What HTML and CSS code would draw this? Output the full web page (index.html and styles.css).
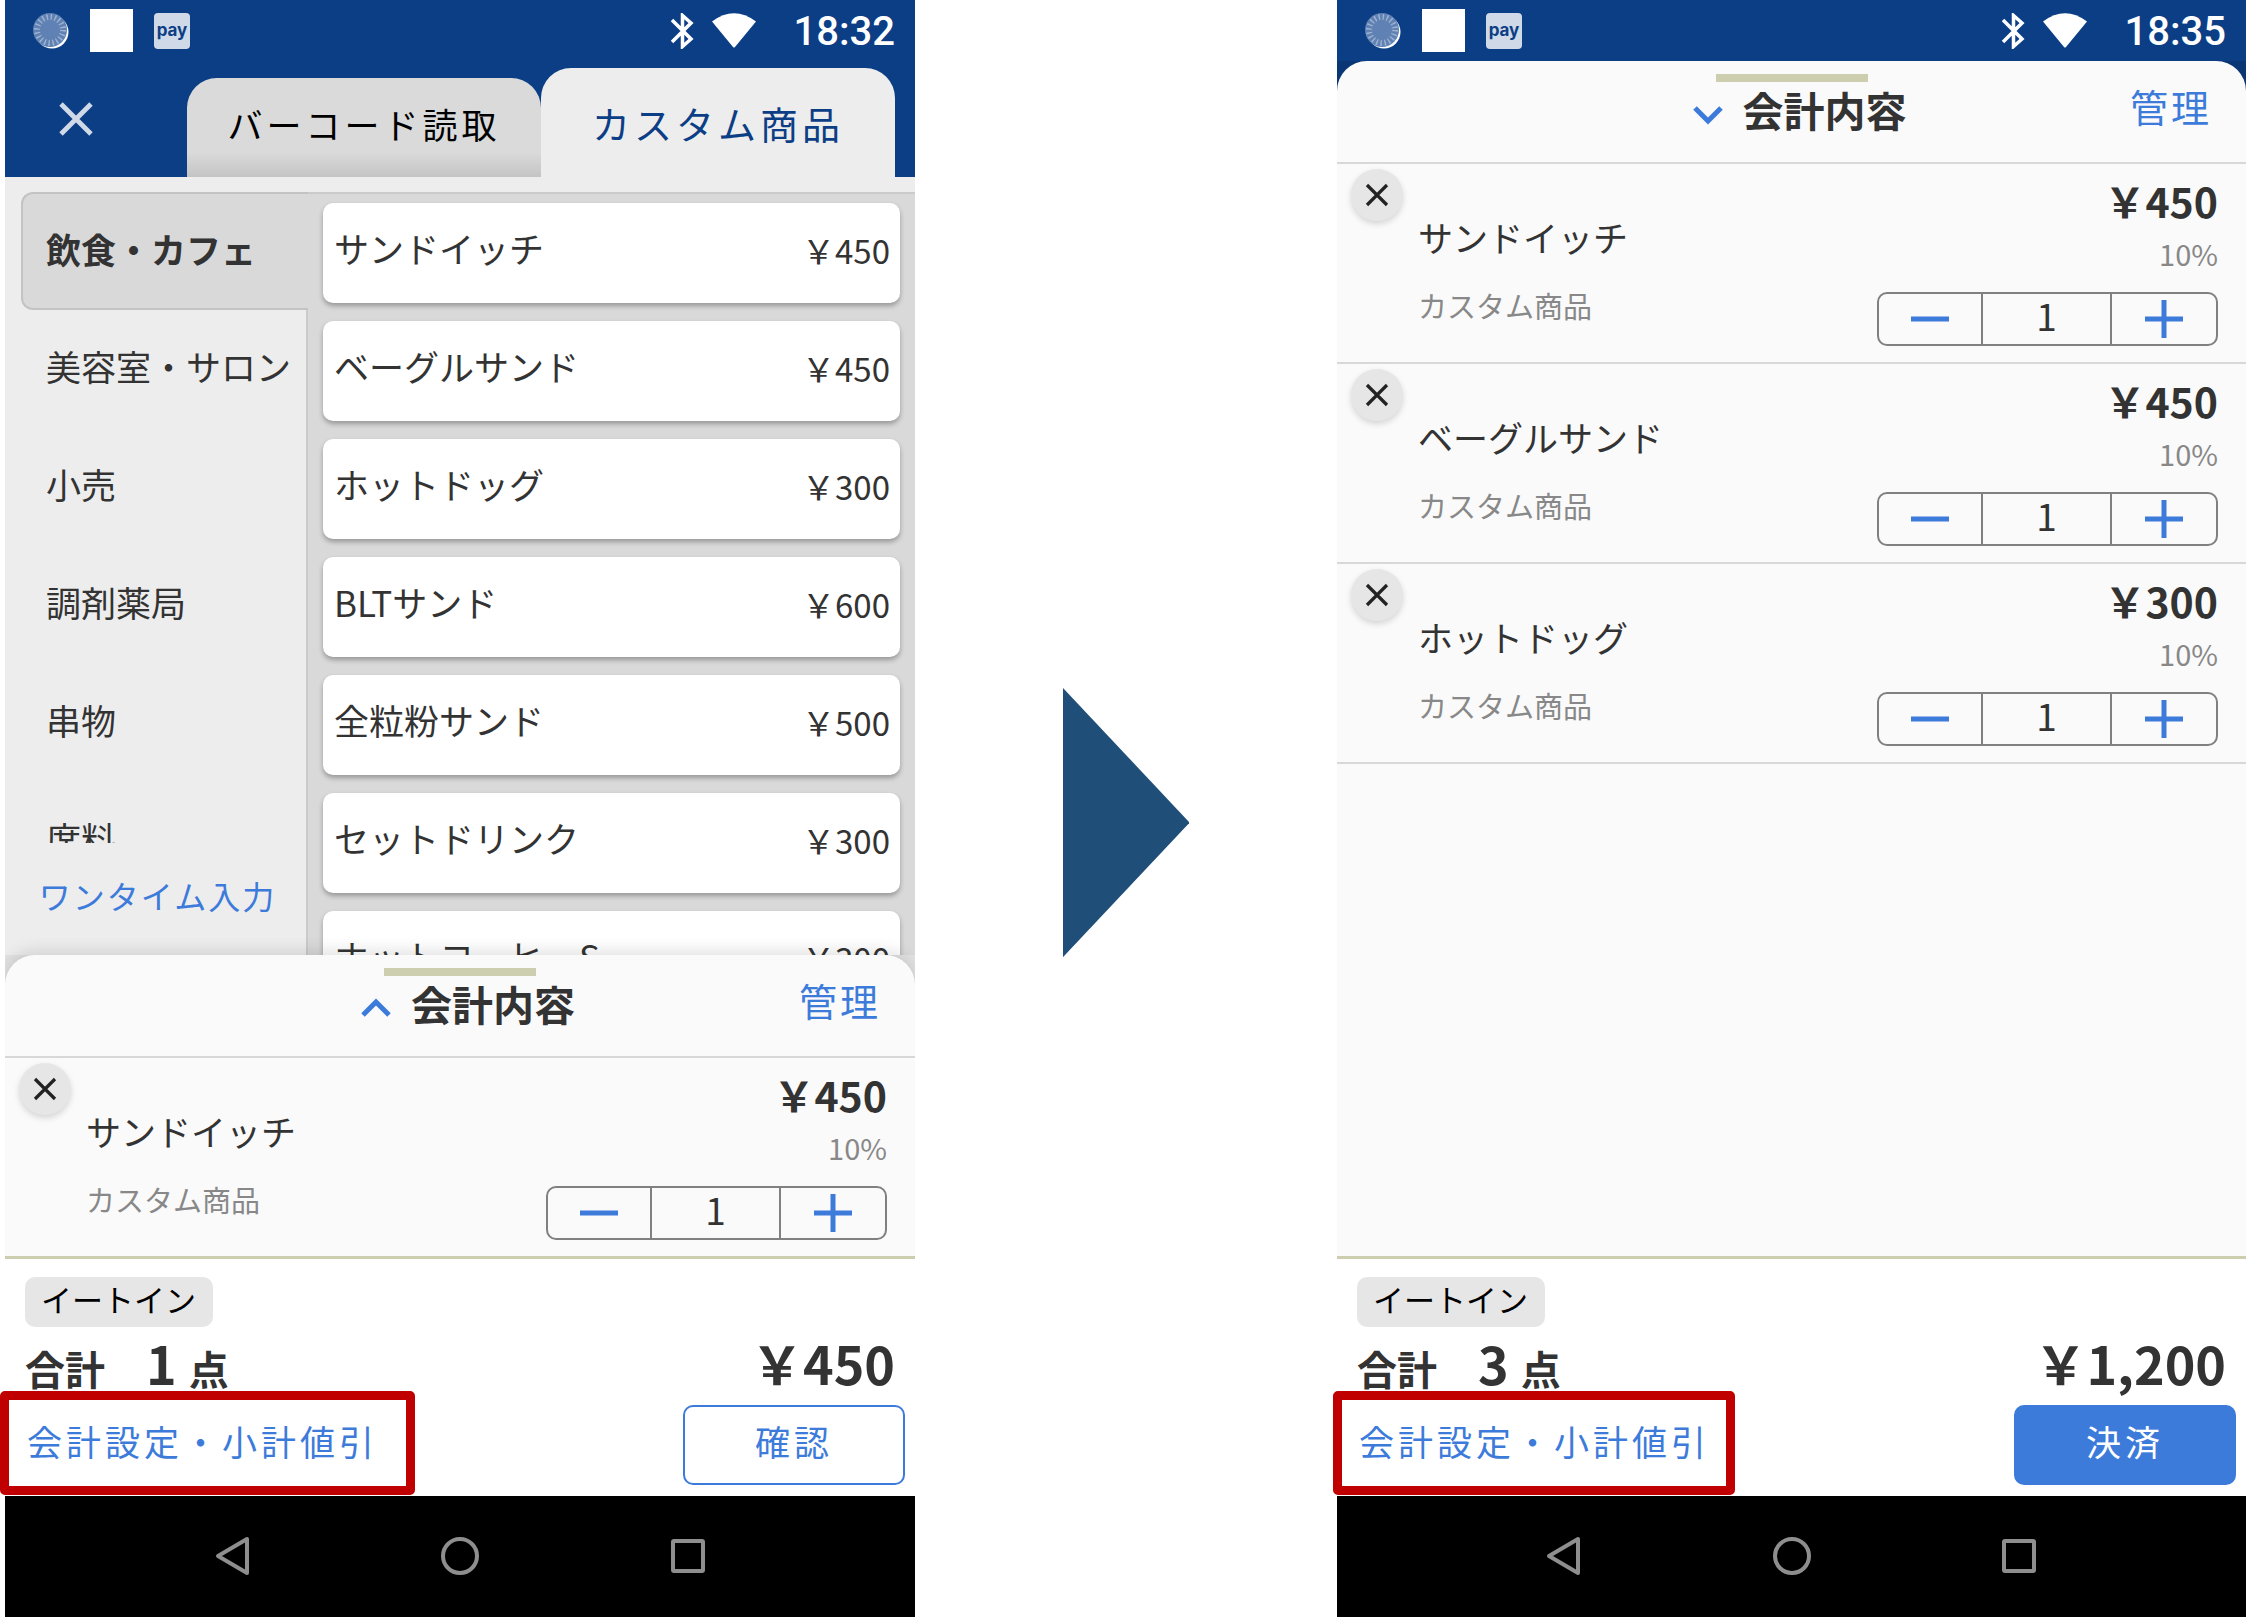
FILE: index.html
```html
<!DOCTYPE html>
<html lang="ja">
<head>
<meta charset="utf-8">
<title>会計内容</title>
<link rel="stylesheet" href="styles.css">
</head>
<body>
<svg class="defs" aria-hidden="true">
  <symbol id="i-sync" viewBox="0 0 36 36">
    <circle cx="19" cy="19" r="16.500" fill="#fff"/>
    <circle cx="17" cy="17" r="17" fill="#5f81b3"/>
    <circle cx="17" cy="17" r="13" fill="none" stroke="#9fb3d1" stroke-width="6" stroke-dasharray="1.4 2.7"/>
  </symbol>
  <symbol id="i-bt" viewBox="0 0 24 36">
    <path d="M2 7 L21 26 L12.500 33.500 V2.500 L21 10 L2 29" fill="none" stroke="#fff" stroke-width="3.500"/>
  </symbol>
  <symbol id="i-wifi" viewBox="0 0 44 35">
    <path d="M0 8.500 Q22 -8 44 8.500 L23 34 Q22 35 21 34 Z" fill="#fff"/>
  </symbol>
  <symbol id="i-x" viewBox="0 0 24 24">
    <path d="M2 2 L22 22 M22 2 L2 22" fill="none" stroke="currentColor" stroke-width="3.200"/>
  </symbol>
  <symbol id="i-up" viewBox="0 0 58 58">
    <path d="M16 38 L29 25 L42 38" fill="none" stroke="#3d7bdb" stroke-width="5"/>
  </symbol>
  <symbol id="i-down" viewBox="0 0 58 58">
    <path d="M16 25 L29 38 L42 25" fill="none" stroke="#3d7bdb" stroke-width="5"/>
  </symbol>
  <symbol id="i-minus" viewBox="0 0 38 38"><path d="M0 19 H38" stroke="#3d7bdb" stroke-width="5"/></symbol>
  <symbol id="i-plus" viewBox="0 0 38 38"><path d="M0 19 H38 M19 0 V38" stroke="#3d7bdb" stroke-width="5"/></symbol>
  <symbol id="i-back" viewBox="0 0 40 40"><path d="M34 3 V37 L5 20 Z" fill="none" stroke="#8e8e8e" stroke-width="4" stroke-linejoin="round"/></symbol>
  <symbol id="i-home" viewBox="0 0 40 40"><circle cx="20" cy="20" r="17" fill="none" stroke="#8e8e8e" stroke-width="4"/></symbol>
  <symbol id="i-recent" viewBox="0 0 40 40"><rect x="5" y="5" width="30" height="30" rx="1" fill="none" stroke="#8e8e8e" stroke-width="4"/></symbol>
</svg>
<main class="steps">
  <section class="phone">
    <div class="status">
      <svg class="sync"><use href="#i-sync"/></svg>
      <span class="blank"></span>
      <span class="pay">pay</span>
      <svg class="bt"><use href="#i-bt"/></svg>
      <svg class="wifi"><use href="#i-wifi"/></svg>
      <span class="time">18:32</span>
    </div>
    <header class="top">
      <button class="close" aria-label="閉じる"><svg><use href="#i-x"/></svg></button>
      <button class="tab">バーコード読取</button>
      <button class="tab active">カスタム商品</button>
    </header>
    <div class="catalog">
      <nav class="side">
        <div class="cats">
          <button class="cat selected">飲食・カフェ</button>
          <button class="cat">美容室・サロン</button>
          <button class="cat">小売</button>
          <button class="cat">調剤薬局</button>
          <button class="cat">串物</button>
          <button class="cat">席料</button>
        </div>
        <button class="onetime">ワンタイム入力</button>
      </nav>
      <div class="products">
        <button class="product"><span>サンドイッチ</span><span class="yen">￥450</span></button>
        <button class="product"><span>ベーグルサンド</span><span class="yen">￥450</span></button>
        <button class="product"><span>ホットドッグ</span><span class="yen">￥300</span></button>
        <button class="product"><span>BLTサンド</span><span class="yen">￥600</span></button>
        <button class="product"><span>全粒粉サンド</span><span class="yen">￥500</span></button>
        <button class="product"><span>セットドリンク</span><span class="yen">￥300</span></button>
        <button class="product"><span>ホットコーヒーS</span><span class="yen">￥300</span></button>
      </div>
    </div>
    <div class="sheet">
      <div class="sheet-head">
        <button class="toggle"><svg><use href="#i-up"/></svg><span>会計内容</span></button>
        <button class="manage">管理</button>
      </div>
      <div class="item">
        <button class="remove" aria-label="削除"><svg><use href="#i-x"/></svg></button>
        <div class="info"><span class="name">サンドイッチ</span><span class="kind">カスタム商品</span></div>
        <div class="amount">
          <span class="price">￥450</span><span class="rate">10%</span>
          <div class="qty"><button aria-label="減らす"><svg><use href="#i-minus"/></svg></button><span>1</span><button aria-label="増やす"><svg><use href="#i-plus"/></svg></button></div>
        </div>
      </div>
    </div>
    <footer class="summary">
      <span class="tag">イートイン</span>
      <div class="total"><span>合計</span><span class="count">1</span><span>点</span><span class="sum">￥450</span></div>
      <div class="actions">
        <a class="settings" href="#">会計設定・小計値引</a>
        <button class="go">確認</button>
      </div>
    </footer>
    <div class="navbar">
      <button aria-label="戻る"><svg><use href="#i-back"/></svg></button>
      <button aria-label="ホーム"><svg><use href="#i-home"/></svg></button>
      <button aria-label="履歴"><svg><use href="#i-recent"/></svg></button>
    </div>
  </section>

  <div class="arrow"><svg viewBox="0 0 127 270"><path d="M0 0 L127 135 L0 270 Z" fill="#1f4e79"/></svg></div>

  <section class="phone expanded">
    <div class="status">
      <svg class="sync"><use href="#i-sync"/></svg>
      <span class="blank"></span>
      <span class="pay">pay</span>
      <svg class="bt"><use href="#i-bt"/></svg>
      <svg class="wifi"><use href="#i-wifi"/></svg>
      <span class="time">18:35</span>
    </div>
    <div class="sheet">
      <div class="sheet-head">
        <button class="toggle"><svg><use href="#i-down"/></svg><span>会計内容</span></button>
        <button class="manage">管理</button>
      </div>
      <div class="item">
        <button class="remove" aria-label="削除"><svg><use href="#i-x"/></svg></button>
        <div class="info"><span class="name">サンドイッチ</span><span class="kind">カスタム商品</span></div>
        <div class="amount">
          <span class="price">￥450</span><span class="rate">10%</span>
          <div class="qty"><button aria-label="減らす"><svg><use href="#i-minus"/></svg></button><span>1</span><button aria-label="増やす"><svg><use href="#i-plus"/></svg></button></div>
        </div>
      </div>
      <div class="item">
        <button class="remove" aria-label="削除"><svg><use href="#i-x"/></svg></button>
        <div class="info"><span class="name">ベーグルサンド</span><span class="kind">カスタム商品</span></div>
        <div class="amount">
          <span class="price">￥450</span><span class="rate">10%</span>
          <div class="qty"><button aria-label="減らす"><svg><use href="#i-minus"/></svg></button><span>1</span><button aria-label="増やす"><svg><use href="#i-plus"/></svg></button></div>
        </div>
      </div>
      <div class="item">
        <button class="remove" aria-label="削除"><svg><use href="#i-x"/></svg></button>
        <div class="info"><span class="name">ホットドッグ</span><span class="kind">カスタム商品</span></div>
        <div class="amount">
          <span class="price">￥300</span><span class="rate">10%</span>
          <div class="qty"><button aria-label="減らす"><svg><use href="#i-minus"/></svg></button><span>1</span><button aria-label="増やす"><svg><use href="#i-plus"/></svg></button></div>
        </div>
      </div>
    </div>
    <footer class="summary">
      <span class="tag">イートイン</span>
      <div class="total"><span>合計</span><span class="count">3</span><span>点</span><span class="sum">￥1,200</span></div>
      <div class="actions">
        <a class="settings" href="#">会計設定・小計値引</a>
        <button class="go primary">決済</button>
      </div>
    </footer>
    <div class="navbar">
      <button aria-label="戻る"><svg><use href="#i-back"/></svg></button>
      <button aria-label="ホーム"><svg><use href="#i-home"/></svg></button>
      <button aria-label="履歴"><svg><use href="#i-recent"/></svg></button>
    </div>
  </section>
</main>
</body>
</html>
```
FILE: styles.css
```css
*, *::before, *::after { box-sizing: border-box; }
body {
  margin: 0;
  background: #fff;
  color: #333;
  font-family: "Noto Sans CJK JP", "Noto Sans", sans-serif;
  font-size: 35px;
  line-height: 40px;
}
button {
  margin: 0;
  padding: 0;
  border: 0;
  background: none;
  color: inherit;
  font: inherit;
  cursor: pointer;
}
svg { display: block; flex: none; }
.defs { position: absolute; width: 0; height: 0; }

.steps {
  display: grid;
  grid-template-columns: 910fr 422fr 909fr;
  height: 100vh;
  padding-left: 5px;
}
.phone {
  display: flex;
  flex-direction: column;
  min-width: 0;
  height: 100vh;
  background: #e2e2e2;
}
.phone.expanded { background: #0a3674; }
.arrow { display: flex; align-items: center; justify-content: center; }
.arrow svg { width: 30%; margin-top: 28px; }

/* Android status bar */
.status {
  display: flex;
  flex: none;
  align-items: center;
  height: 61px;
  padding: 0 20px 0 28px;
  background: #0c3e86;
}
.sync { width: 36px; height: 36px; }
.blank { width: 43px; height: 43px; margin: 0 21px; background: #fff; }
.pay {
  width: 36px;
  height: 36px;
  border-radius: 4px;
  background: #d0d9e8;
  color: #0c3e86;
  font: 700 17px/34px Inter, sans-serif;
  text-align: center;
}
.bt { width: 24px; height: 36px; margin-left: auto; }
.wifi { width: 44px; height: 35px; margin: 0 38px 0 18px; }
.time { padding-top: 3px; color: #fff; font: 500 40px/58px Roboto, sans-serif; }

/* Tabs */
.top {
  display: flex;
  flex: none;
  align-items: flex-end;
  height: 116px;
  padding-right: 20px;
  background: #0c3e86;
}
.close { display: flex; align-items: center; width: 182px; height: 116px; padding-left: 53px; color: #d0d9e8; }
.close svg { width: 36px; height: 36px; }
.tab {
  flex: 1;
  height: 99px;
  padding-bottom: 8px;
  border-radius: 30px 30px 0 0;
  background: linear-gradient(#dadada 75%, #c4c4c4);
  color: #000;
  letter-spacing: 4px;
}
.tab.active { height: 109px; padding-bottom: 0; background: #ededed; color: #0c3e86; font-size: 38px; }

/* Product catalogue */
.catalog {
  display: flex;
  flex: 1 1 0;
  min-height: 0;
  padding-top: 15px;
  background: #ededed;
}
.side { display: flex; flex: none; flex-direction: column; width: 303px; min-height: 0; z-index: 1; }
.cats { flex: 1 1 0; min-height: 0; padding-left: 16px; overflow: hidden; }
.cat {
  display: block;
  width: 100%;
  height: 118px;
  padding: 0 0 6px 25px;
  text-align: left;
  white-space: nowrap;
}
.cat.selected {
  padding: 0 0 4px 23px;
  border: 2px solid #c3c3c3;
  border-right: 0;
  border-radius: 12px 0 0 12px;
  background: #d9d9d9;
  font-weight: 700;
}
.onetime { flex: none; height: 112px; padding: 0 0 8px 2px; color: #3d7bdb; font-size: 32px; letter-spacing: 2px; }
.products {
  display: flex;
  flex: 1;
  flex-direction: column;
  gap: 18px;
  margin-left: -2px;
  padding: 9px 15px 0;
  border: 2px solid #cbcbcb;
  border-width: 2px 0 0 2px;
  background: #d9d9d9;
  overflow: hidden;
}
.product {
  display: flex;
  flex: none;
  align-items: center;
  justify-content: space-between;
  height: 100px;
  padding: 0 10px 11px 11px;
  border-radius: 10px;
  background: #fff;
  box-shadow: 0 3px 5px rgba(0, 0, 0, .3);
}
.yen { padding-top: 4px; font-size: 33px; }

/* Bill sheet */
.sheet {
  flex: none;
  border-radius: 30px 30px 0 0;
  background: #fafafa;
  box-shadow: 0 -4px 16px rgba(0, 0, 0, .12);
  clip-path: inset(-20px 0 0 0);
  z-index: 2;
}
.expanded .sheet { flex: 1 1 0; min-height: 0; box-shadow: none; }
.sheet-head {
  position: relative;
  display: flex;
  align-items: center;
  justify-content: center;
  height: 103px;
  border-bottom: 2px solid #d8d8d8;
}
.sheet-head::before {
  position: absolute;
  top: 13px;
  left: calc(50% - 76px);
  width: 152px;
  height: 8px;
  background: #cdcdb0;
  content: "";
}
.toggle { display: flex; align-items: center; gap: 6px; padding-left: 2px; font-size: 41px; font-weight: 700; }
.toggle svg { width: 58px; height: 58px; }
.toggle span { padding-bottom: 5px; }
.manage { position: absolute; top: 0; right: 34px; height: 90px; color: #3d7bdb; font-size: 38px; letter-spacing: 3px; }
.item {
  display: flex;
  align-items: flex-start;
  height: 198px;
  padding: 5px 28px 0 14px;
}
.expanded .item { height: 200px; border-bottom: 2px solid #d8d8d8; }
.remove {
  display: flex;
  align-items: center;
  justify-content: center;
  width: 52px;
  height: 52px;
  border-radius: 50%;
  background: #e6e6e6;
  color: #222;
  box-shadow: 0 3px 6px rgba(0, 0, 0, .15);
}
.remove svg { width: 24px; height: 24px; }
.info { display: flex; flex: 1; flex-direction: column; gap: 28px; padding: 48px 0 0 15px; }
.kind, .rate { color: #888; font-size: 29px; }
.amount { display: flex; flex-direction: column; align-items: flex-end; }
.price { height: 64px; font-size: 41px; font-weight: 700; line-height: 62px; }
.rate { height: 59px; }
.qty {
  display: grid;
  grid-template-columns: 102px 131px 104px;
  width: 341px;
  height: 54px;
  border: 2px solid #808080;
  border-radius: 10px;
}
.qty button { display: flex; align-items: center; justify-content: center; }
.qty svg { width: 38px; height: 38px; }
.qty span { border: 2px solid #808080; border-width: 0 2px; font-size: 37px; line-height: 42px; text-align: center; }

/* Totals and actions */
.summary {
  flex: none;
  height: 240px;
  padding: 18px 10px 0 20px;
  border-top: 3px solid #cdcdb0;
  background: #fff;
}
.tag {
  display: block;
  width: max-content;
  height: 50px;
  padding: 0 17px 0 16px;
  border-radius: 10px;
  background: #e6e6e6;
  color: #000;
  font-size: 31px;
  line-height: 44px;
}
.total { display: flex; align-items: baseline; height: 78px; padding-right: 10px; font-size: 40px; font-weight: 700; line-height: 72px; }
.count { margin: 0 12px 0 41px; font-size: 52px; }
.sum { margin-left: auto; font-size: 52px; }
.actions { position: relative; display: flex; align-items: center; justify-content: space-between; height: 80px; }
.settings { padding: 0 0 9px 2px; color: #3d7bdb; letter-spacing: 4px; text-decoration: none; }
/* Red frame that points out the settings link */
.settings::after {
  position: absolute;
  top: -14px;
  left: -25px;
  width: 415px;
  height: 104px;
  border: 9px solid #c00000;
  border-radius: 5px;
  content: "";
}
.expanded .settings::after { left: -24px; width: 402px; }
.go { width: 222px; height: 80px; padding-bottom: 8px; border: 2px solid #3d7bdb; border-radius: 10px; color: #3d7bdb; letter-spacing: 4px; }
.go.primary { background: #3d7bdb; color: #fff; }

/* Android navigation bar */
.navbar {
  display: flex;
  flex: none;
  align-items: center;
  justify-content: space-evenly;
  height: 121px;
  padding: 0 20px 2px;
  background: #000;
}
.navbar svg { width: 40px; height: 40px; }
```
